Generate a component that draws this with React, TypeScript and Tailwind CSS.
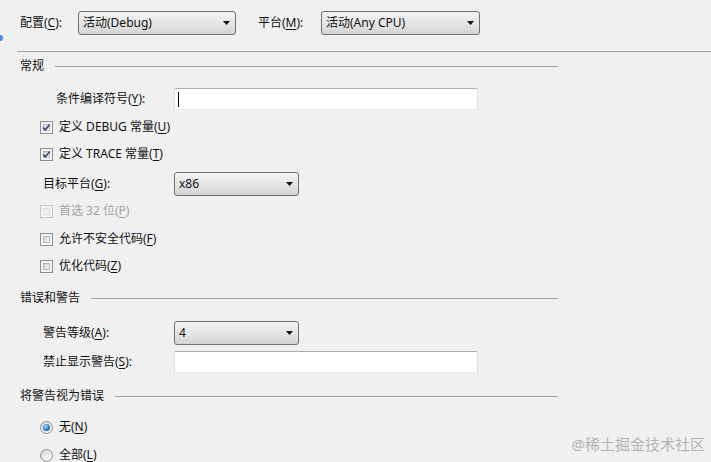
import React from 'react'

const font = { fontFamily: '"Noto Sans", "Noto Sans CJK SC", sans-serif' }

function Mn({ children }: { children: React.ReactNode }) {
  return <span className="underline underline-offset-2 decoration-1">{children}</span>
}

function Select({ value, w }: { value: string; w: string }) {
  return (
    <div
      className={`${w} h-[24px] flex items-center justify-between pl-[4px] pr-[5px] rounded-[3px] border border-[#707070] bg-gradient-to-b from-[#f3f3f3] via-[#e6e6e6] to-[#d4d4d4] text-[12px] text-[#111]`}
    >
      <span>{value}</span>
      <svg width="7" height="4" viewBox="0 0 7 4">
        <path d="M0 0h7L3.5 4z" fill="#111" />
      </svg>
    </div>
  )
}

function TextBox({ caret }: { caret?: boolean }) {
  return (
    <div className="w-[304px] h-[22px] flex items-center px-[3px] rounded-[2px] border border-[#abadb3] border-l-[#dbdfe6] border-r-[#dbdfe6] border-b-[#e3e9ef] bg-white">
      {caret && <div className="w-px h-[15px] bg-black" />}
    </div>
  )
}

function Check({ checked, disabled }: { checked?: boolean; disabled?: boolean }) {
  return (
    <div
      className={`w-[13px] h-[13px] border p-[2px] ${disabled ? 'border-[#c6c6c6] bg-[#f4f4f4]' : 'border-[#8e8f8f] bg-[#f4f4f4]'}`}
    >
      <div
        className={`w-full h-full relative ${disabled ? 'bg-[#f0f0f0] border border-[#dedede]' : 'bg-gradient-to-br from-[#cfd2d7] to-[#f7f7f8] border border-[#b8babd]'}`}
      >
        {checked && (
          <svg className="absolute -left-[2px] -top-[2px]" width="9" height="9" viewBox="0 0 9 9">
            <path d="M1.2 4.6L3.4 6.8L7.8 1.6" fill="none" stroke="#36457a" strokeWidth="1.6" />
          </svg>
        )}
      </div>
    </div>
  )
}

function Radio({ checked }: { checked?: boolean }) {
  return (
    <div className="w-[13px] h-[13px] rounded-full border border-[#8e8f8f] bg-gradient-to-br from-[#d6d8db] to-[#fbfbfb] flex items-center justify-center">
      {checked && (
        <div className="w-[7px] h-[7px] rounded-full bg-[radial-gradient(circle_at_40%_35%,#a8d6f4,#2a7ac2_55%,#17508f)]" />
      )}
    </div>
  )
}

function CheckRow({
  children,
  checked,
  disabled,
  mt,
}: {
  children: React.ReactNode
  checked?: boolean
  disabled?: boolean
  mt: string
}) {
  return (
    <div className={`${mt} h-[20px] flex items-center gap-[6px] pl-[40px] ${disabled ? 'text-[#a3a3a3]' : ''}`}>
      <Check checked={checked} disabled={disabled} />
      <span>{children}</span>
    </div>
  )
}

function Header({ title, mt }: { title: string; mt: string }) {
  return (
    <div className={`${mt} w-[558px] h-[16px] flex items-center gap-[11px] pl-[20px]`}>
      <span>{title}</span>
      <div className="flex-1 h-px bg-[#a5a5a5]" />
    </div>
  )
}

export default function App() {
  return (
    <div className="relative w-[711px] h-[462px] overflow-hidden bg-[#f0f0f0] text-[12px] leading-none text-[#111]" style={font}>
      <div className="absolute -left-[3px] top-[35px] w-[6px] h-[6px] rounded-full bg-[#3d8fe0]" />

      {/* top bar */}
      <div className="pt-[11px] flex items-center pl-[20px]">
        <span className="w-[58px]">
          配置(<Mn>C</Mn>):
        </span>
        <Select value="活动(Debug)" w="w-[158px]" />
        <span className="ml-[22px] w-[63px]">
          平台(<Mn>M</Mn>):
        </span>
        <Select value="活动(Any CPU)" w="w-[159px]" />
      </div>
      <div className="mt-[16px] ml-[17px] h-px bg-[#a5a5a5]" />

      {/* 常规 */}
      <Header title="常规" mt="mt-[6px]" />
      <div className="mt-[14px] h-[22px] flex items-center pl-[56px]">
        <span className="w-[118px]">
          条件编译符号(<Mn>Y</Mn>):
        </span>
        <TextBox caret />
      </div>
      <CheckRow checked mt="mt-[7px]">
        定义 DEBUG 常量(<Mn>U</Mn>)
      </CheckRow>
      <CheckRow checked mt="mt-[7px]">
        定义 TRACE 常量(<Mn>T</Mn>)
      </CheckRow>
      <div className="mt-[8px] h-[24px] flex items-center pl-[43px]">
        <span className="w-[131px]">
          目标平台(<Mn>G</Mn>):
        </span>
        <Select value="x86" w="w-[125px]" />
      </div>
      <CheckRow disabled mt="mt-[5px]">
        首选 32 位(<Mn>P</Mn>)
      </CheckRow>
      <CheckRow mt="mt-[8px]">
        允许不安全代码(<Mn>F</Mn>)
      </CheckRow>
      <CheckRow mt="mt-[7px]">
        优化代码(<Mn>Z</Mn>)
      </CheckRow>

      {/* 错误和警告 */}
      <Header title="错误和警告" mt="mt-[14px]" />
      <div className="mt-[15px] h-[24px] flex items-center pl-[43px]">
        <span className="w-[131px]">
          警告等级(<Mn>A</Mn>):
        </span>
        <Select value="4" w="w-[125px]" />
      </div>
      <div className="mt-[6px] h-[22px] flex items-center pl-[43px]">
        <span className="w-[131px]">
          禁止显示警告(<Mn>S</Mn>):
        </span>
        <TextBox />
      </div>

      {/* 将警告视为错误 */}
      <Header title="将警告视为错误" mt="mt-[15px]" />
      <div className="mt-[13px] h-[20px] flex items-center gap-[6px] pl-[40px]">
        <Radio checked />
        <span>
          无(<Mn>N</Mn>)
        </span>
      </div>
      <div className="mt-[8px] h-[20px] flex items-center gap-[6px] pl-[40px]">
        <Radio />
        <span>
          全部(<Mn>L</Mn>)
        </span>
      </div>

      <div className="absolute right-[6px] top-[437px] text-[15px] leading-none text-[#b4b4b4]">
        @稀土掘金技术社区
      </div>
    </div>
  )
}
